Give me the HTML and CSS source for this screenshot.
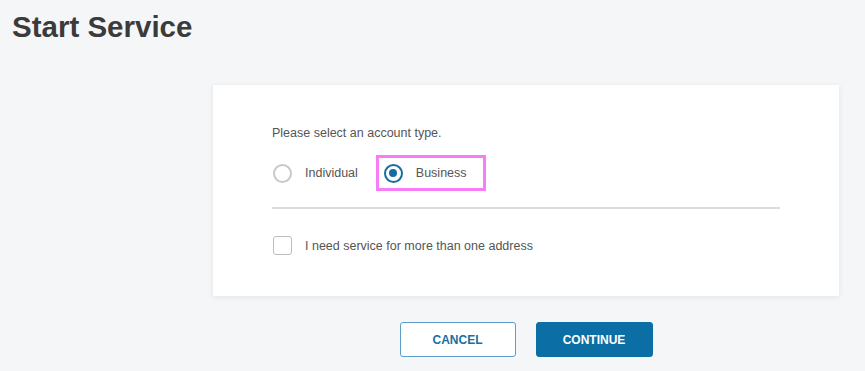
FILE: index.html
```html
<!DOCTYPE html>
<html lang="en">
<head>
    <meta charset="UTF-8">
    <meta name="viewport" content="width=device-width, initial-scale=1.0">
    <title>Start Service</title>
    <link rel="stylesheet" href="styles.css">
</head>
<body>
    <h1 class="page-title">Start Service</h1>

    <div class="content">
        <!-- account type card -->
        <form class="card">
            <p class="card-label">Please select an account type.</p>

            <div class="radio-group">
                <label class="radio-option">
                    <span class="radio"></span>
                    <span>Individual</span>
                </label>
                <label class="radio-option is-selected">
                    <span class="radio checked"></span>
                    <span>Business</span>
                </label>
            </div>

            <hr class="divider">

            <label class="check-option">
                <span class="checkbox"></span>
                <span>I need service for more than one address</span>
            </label>
        </form>

        <!-- actions -->
        <div class="actions">
            <button type="button" class="btn btn-outline">CANCEL</button>
            <button type="button" class="btn btn-primary">CONTINUE</button>
        </div>
    </div>
</body>
</html>
```

FILE: styles.css
```css
* {
    margin: 0;
    padding: 0;
    box-sizing: border-box;
}

body {
    font-family: 'Liberation Sans', Arial, sans-serif;
    background: #f5f6f8;
    color: #555;
    padding: 11px 12px;
    min-height: 100vh;
}

.page-title {
    font-size: 29.5px;
    font-weight: bold;
    color: #3b3b3b;
    line-height: 32px;
}

.content {
    width: 626px;
    margin: 42px 0 0 201px;
}

/* card */
.card {
    background: #fff;
    box-shadow: 0 1px 6px rgba(0, 0, 0, 0.08);
    padding: 40px 59px 41px;
}

.card-label {
    font-size: 12.5px;
    line-height: 16px;
    color: #555;
}

.radio-group {
    display: flex;
    align-items: center;
    gap: 18px;
    margin-top: 14px;
}

.radio-option {
    display: flex;
    align-items: center;
    gap: 13px;
    height: 36px;
    font-size: 12.5px;
    color: #555;
    cursor: pointer;
}

.radio-option:first-child {
    padding-left: 1px;
}

.radio-option.is-selected {
    border: 3px solid #f77cf7;
    padding: 0 16px 0 5px;
}

.radio {
    width: 19px;
    height: 19px;
    border: 2px solid #c9c9c9;
    border-radius: 50%;
    display: flex;
    align-items: center;
    justify-content: center;
}

.radio.checked {
    border-color: #156ea3;
}

.radio.checked::after {
    content: "";
    width: 8px;
    height: 8px;
    border-radius: 50%;
    background: #156ea3;
}

.divider {
    border: none;
    border-top: 2px solid #dcdcdc;
    margin-top: 16px;
    width: 508px;
}

.check-option {
    display: flex;
    align-items: center;
    gap: 13px;
    margin-top: 27px;
    padding-left: 1px;
    font-size: 12.5px;
    color: #555;
    cursor: pointer;
}

.checkbox {
    width: 19px;
    height: 19px;
    border: 1.5px solid #bdbdbd;
    border-radius: 3px;
}

/* buttons */
.actions {
    display: flex;
    justify-content: center;
    gap: 20px;
    margin-top: 26px;
}

.btn {
    font-family: 'Liberation Sans', Arial, sans-serif;
    font-size: 12px;
    font-weight: bold;
    height: 35px;
    border-radius: 3px;
    cursor: pointer;
}

.btn-outline {
    width: 116px;
    background: #fff;
    border: 1px solid #5c9ec7;
    color: #1a6fa0;
}

.btn-primary {
    width: 117px;
    background: #0b6ea5;
    border: 1px solid #0b6ea5;
    color: #fff;
}
```
